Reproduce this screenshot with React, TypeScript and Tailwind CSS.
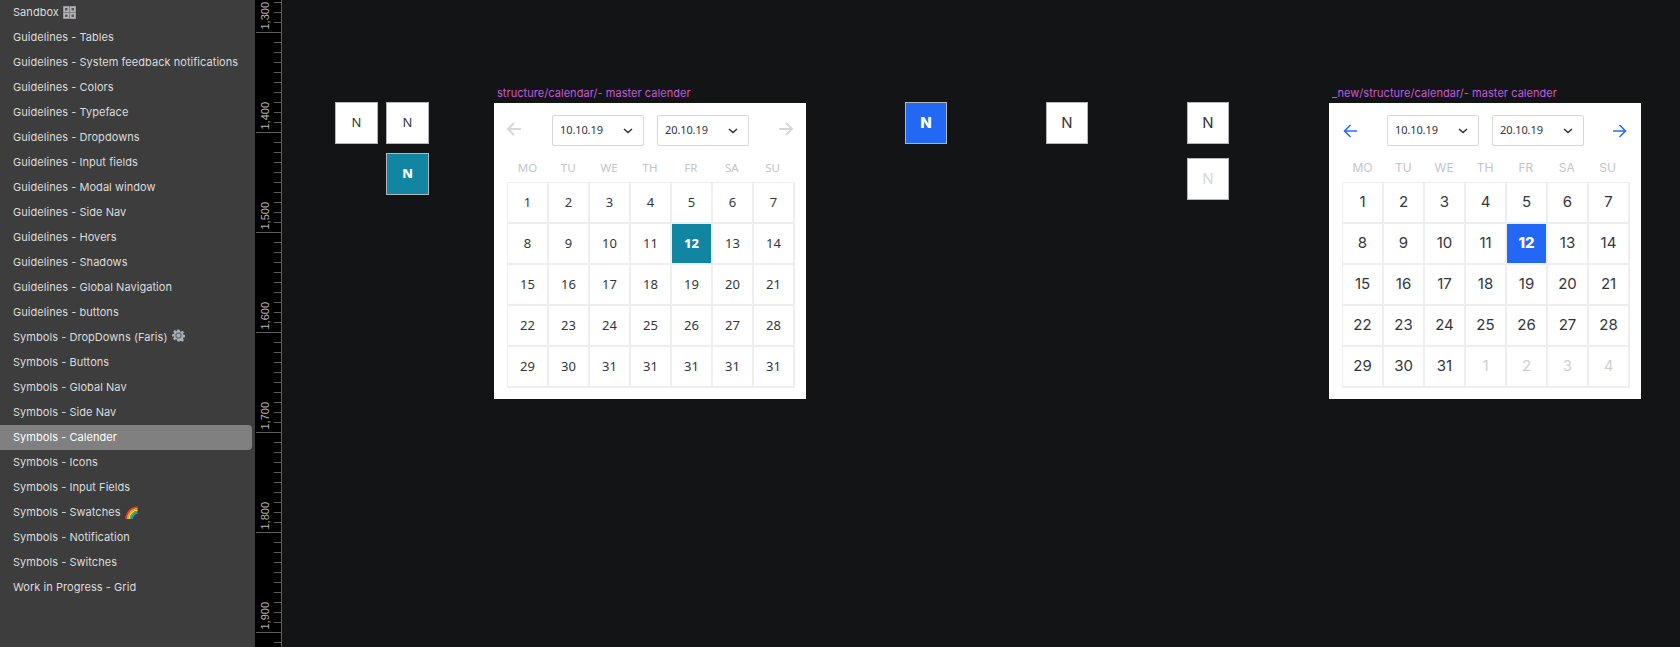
import React from "react";

const pages = [
  "Sandbox",
  "Guidelines - Tables",
  "Guidelines - System feedback notifications",
  "Guidelines - Colors",
  "Guidelines - Typeface",
  "Guidelines - Dropdowns",
  "Guidelines - Input fields",
  "Guidelines - Modal window",
  "Guidelines - Side Nav",
  "Guidelines - Hovers",
  "Guidelines - Shadows",
  "Guidelines - Global Navigation",
  "Guidelines - buttons",
  "Symbols - DropDowns (Faris)",
  "Symbols - Buttons",
  "Symbols - Global Nav",
  "Symbols - Side Nav",
  "Symbols - Calender",
  "Symbols - Icons",
  "Symbols - Input Fields",
  "Symbols - Swatches",
  "Symbols - Notification",
  "Symbols - Switches",
  "Work in Progress - Grid",
];

const weekDays = ["MO", "TU", "WE", "TH", "FR", "SA", "SU"];
const oldDays = [...Array.from({ length: 30 }, (_, i) => i + 1), 31, 31, 31, 31, 31].map(String);
const newDays = [...Array.from({ length: 31 }, (_, i) => i + 1), 1, 2, 3, 4].map(String);

const GridIcon = () => (
  <svg width="13" height="13" viewBox="0 0 13 13" className="ml-[4px]">
    <rect width="13" height="13" fill="#7c7f81" />
    <rect x="0.500" y="0.500" width="5.500" height="5.500" fill="#b3b6b8" />
    <rect x="7" y="0.500" width="5.500" height="5.500" fill="#b3b6b8" />
    <rect x="0.500" y="7" width="5.500" height="5.500" fill="#b3b6b8" />
    <rect x="7" y="7" width="5.500" height="5.500" fill="#b3b6b8" />
    <rect x="2" y="2" width="2.500" height="2.500" fill="#55585a" />
    <rect x="8.500" y="2" width="2.500" height="2.500" fill="#55585a" />
    <rect x="2" y="8.500" width="2.500" height="2.500" fill="#55585a" />
    <rect x="8.500" y="8.500" width="2.500" height="2.500" fill="#55585a" />
  </svg>
);

const GearIcon = () => (
  <svg width="13" height="13" viewBox="0 0 24 24" className="ml-[5px] -translate-y-[2px]">
    <path
      fill="#a9b0b8"
      d="M10 1h4l.6 3.200 2 .8L19.300 3.200l2.800 2.800-1.800 2.700.8 2 3.200.6v4l-3.200.6-.8 2 1.800 2.700-2.800 2.800-2.700-1.800-2 .8L14 23h-4l-.6-3.200-2-.8-2.700 1.800-2.800-2.800 1.800-2.700-.8-2L0 14v-4l3.200-.6.8-2L2.200 4.700 5 1.900l2.700 1.800 2-.8z"
    />
    <circle cx="12" cy="12" r="6" fill="#666d75" />
    <circle cx="12" cy="12" r="3.500" fill="#a4abb3" />
  </svg>
);

const RainbowIcon = () => (
  <svg width="13" height="13" viewBox="0 0 13 13" fill="none" className="ml-[4px]">
    <path d="M1 13C1 7 5.500 1.500 12.500 1" stroke="#e8372f" strokeWidth="1.600" />
    <path d="M2.500 13C2.500 8 6.500 2.800 12.500 2.500" stroke="#f4a122" strokeWidth="1.600" />
    <path d="M4 13C4 9 7.500 4.300 12.500 4" stroke="#f5e033" strokeWidth="1.600" />
    <path d="M5.500 13C5.500 10 8.500 5.800 12.500 5.500" stroke="#46b649" strokeWidth="1.600" />
    <path d="M7 13C7 11 9.500 7.300 12.500 7" stroke="#3a8de0" strokeWidth="1.600" />
  </svg>
);

const Sidebar = () => (
  <aside className="h-full w-[255px] shrink-0 bg-[#3d3d3d] font-['Inter',sans-serif] text-[11px] tracking-[0.05px] text-[#dcdcdc]">
    {pages.map((page) => (
      <div
        key={page}
        className={`mr-[3px] flex h-[25px] items-center rounded-r-[4px] pl-[13px] ${
          page === "Symbols - Calender" ? "bg-[#808080] text-white" : ""
        }`}
      >
        {page}
        {page === "Sandbox" && <GridIcon />}
        {page === "Symbols - DropDowns (Faris)" && <GearIcon />}
        {page === "Symbols - Swatches" && <RainbowIcon />}
      </div>
    ))}
  </aside>
);

const ticks = Array.from({ length: 65 }, (_, i) => i);

const Ruler = () => (
  <div className="relative h-full w-[27px] shrink-0 overflow-hidden border-r border-[#5c5c5c] bg-black pt-[2px]">
    {ticks.map((i) => (
      <div key={i} className="flex h-[10px] justify-end">
        <div className={`h-px bg-[#5c5c5c] ${i % 10 === 3 ? "w-[25px]" : "w-[7px]"}`} />
      </div>
    ))}
    {[1300, 1400, 1500, 1600, 1700, 1800, 1900].map((n, i) => (
      <span
        key={n}
        className="absolute left-[4px] rotate-180 font-['Liberation_Sans',sans-serif] text-[11px] leading-[13px] text-[#b5b5b5] [writing-mode:vertical-rl]"
        style={{ bottom: 647 - 30 - i * 100 }}
      >
        {n.toLocaleString("en-US")}
      </span>
    ))}
  </div>
);

const Arrow = ({ dir, modern }: { dir: "left" | "right"; modern?: boolean }) =>
  modern ? (
    <svg width="14" height="14" viewBox="0 0 14 14" fill="none" stroke="#2a6bf2" strokeWidth="1.600">
      {dir === "left" ? <path d="M14 7H1.500M7.500 1 1.500 7l6 6" /> : <path d="M0 7h12.500M6.500 1l6 6-6 6" />}
    </svg>
  ) : (
    <svg width="16" height="14" viewBox="0 0 16 14" fill="none" stroke="#d6d7d8" strokeWidth="2" className="-translate-y-[2px]">
      {dir === "left" ? <path d="M15 7H2M8 1 2 7l6 6" /> : <path d="M1 7h13M8 1l6 6-6 6" />}
    </svg>
  );

const Chevron = () => (
  <svg width="10" height="6" viewBox="0 0 10 6" fill="none" stroke="#2d3036" strokeWidth="1.500">
    <path d="m1 1 4 3.500L9 1" />
  </svg>
);

const DateSelect = ({ value }: { value: string }) => (
  <div className="flex h-[31px] w-[92px] items-center justify-between rounded-[2px] border border-[#d5d6d8] pl-[7px] pr-[10px] font-['Noto_Sans',sans-serif] text-[11px] tracking-[-0.1px] text-[#33363c]">
    {value}
    <Chevron />
  </div>
);

type CalendarProps = {
  title: string;
  x: string;
  days: string[];
  modern?: boolean;
};

const Calendar = ({ title, x, days, modern }: CalendarProps) => (
  <div className={`absolute top-[103px] h-[296px] w-[312px] bg-white ${x}`}>
    <div className="absolute -top-[17px] left-[3px] whitespace-nowrap font-['Inter',sans-serif] text-[11px] leading-[14px] tracking-[0.05px] text-[#c558dc]">
      {title}
    </div>
    <div className={`flex h-[55px] items-center ${modern ? "px-[14px]" : "px-[12px]"}`}>
      <Arrow dir="left" modern={modern} />
      <div className={`mr-auto flex gap-[13px] ${modern ? "ml-[30px]" : "ml-[30px]"}`}>
        <DateSelect value="10.10.19" />
        <DateSelect value="20.10.19" />
      </div>
      <Arrow dir="right" modern={modern} />
    </div>
    <div className="mx-[13px] grid grid-cols-7">
      {weekDays.map((d) => (
        <div
          key={d}
          className={`flex h-[24px] items-center justify-center pb-[4px] text-[#c3c4c7] ${
            modern ? "font-['Inter',sans-serif] text-[12px]" : "font-['Noto_Sans',sans-serif] text-[11.500px]"
          }`}
        >
          {d}
        </div>
      ))}
    </div>
    <div className="ml-[13px] grid w-max grid-cols-[repeat(7,41px)] border-l border-t border-[#eeeeee]">
      {days.map((d, i) => {
        const selected = i === 11;
        const muted = modern && i > 30;
        return (
          <div
            key={i}
            className={`flex h-[41px] items-center justify-center border-b-2 border-r-2 border-[#eeeeee] ${
              modern ? "font-['Inter',sans-serif] text-[15px]" : "font-['Noto_Sans',sans-serif] text-[13px]"
            } ${
              selected
                ? `font-extrabold text-white ${modern ? "bg-[#2268f5]" : "bg-[#1285a3]"}`
                : muted
                  ? "text-[#cdced3]"
                  : "text-[#33363c]"
            }`}
          >
            {d}
          </div>
        );
      })}
    </div>
  </div>
);

const NBox = ({ className }: { className: string }) => (
  <div className={`absolute flex h-[42px] items-center justify-center border border-[#b4b6b8] ${className}`}>
    N
  </div>
);

export default function App() {
  return (
    <div className="flex h-[647px] w-[1680px] overflow-hidden bg-[#131416]">
      <Sidebar />
      <Ruler />
      <main className="relative flex-1">
        {/* artboards, offsets are relative to the canvas */}
        <div className="absolute -left-[282px] top-0 h-full w-[1680px]">
          <NBox className="left-[335px] top-[102px] w-[43px] bg-white font-['Noto_Sans',sans-serif] text-[13px] text-[#33363c]" />
          <NBox className="left-[386px] top-[102px] w-[43px] bg-white font-['Noto_Sans',sans-serif] text-[13px] text-[#33363c]" />
          <NBox className="left-[386px] top-[153px] w-[43px] bg-[#1285a3] font-['Noto_Sans',sans-serif] text-[13px] font-extrabold text-white" />
          <Calendar title="structure/calendar/- master calender" x="left-[494px]" days={oldDays} />
          <NBox className="left-[905px] top-[102px] w-[42px] bg-[#2268f5] font-['Inter',sans-serif] text-[15px] font-extrabold text-white" />
          <NBox className="left-[1046px] top-[102px] w-[42px] bg-white font-['Inter',sans-serif] text-[15px] text-[#33363c]" />
          <NBox className="left-[1187px] top-[102px] w-[42px] bg-white font-['Inter',sans-serif] text-[15px] text-[#33363c]" />
          <NBox className="left-[1187px] top-[158px] w-[42px] bg-white font-['Inter',sans-serif] text-[15px] text-[#d5d6dc]" />
          <Calendar title="_new/structure/calendar/- master calender" x="left-[1329px]" days={newDays} modern />
        </div>
      </main>
    </div>
  );
}
